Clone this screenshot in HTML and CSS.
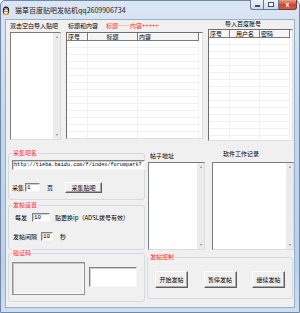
FILE: index.html
```html
<!DOCTYPE html>
<html lang="zh-CN">
<head>
  <meta charset="UTF-8">
  <title>猫草百度贴吧发帖机</title>
  <link rel="stylesheet" href="styles.css">
</head>
<body>
  <div class="window">
    <div class="titlebar">
      <svg class="app-icon" viewBox="0 0 8 9">
        <ellipse cx="4" cy="4.5" rx="3.2" ry="4" fill="#1a1a1a"/>
        <ellipse cx="4" cy="5.6" rx="2.2" ry="2.5" fill="#fff"/>
        <ellipse cx="3" cy="2.5" rx=".6" ry=".8" fill="#fff"/>
        <ellipse cx="5" cy="2.5" rx=".6" ry=".8" fill="#fff"/>
        <path d="M3.1 3.4h1.8l-.9.8z" fill="#f5b400"/>
        <path d="M1.4 4.4q2.6 1 5.2 0v.9q-2.6 1-5.2 0z" fill="#e02020"/>
        <ellipse cx="2.5" cy="8.4" rx="1.3" ry=".55" fill="#f5b400"/>
        <ellipse cx="5.5" cy="8.4" rx="1.3" ry=".55" fill="#f5b400"/>
      </svg>
      <span class="title">猫草百度贴吧发帖机qq2609906734</span>
      <div class="caption">
        <span class="cbtn min"><i></i></span>
        <span class="cbtn max"><i></i></span>
        <span class="cbtn close">x</span>
      </div>
    </div>

    <div class="client">
      <div class="top-row">
        <div class="col-bars">
          <div class="lbl">双击空白导入贴吧</div>
          <div class="listbox lb-bars">
            <div class="sb"><span class="up"></span><span class="down"></span></div>
          </div>
        </div>

        <div class="col-posts">
          <div class="lbl">标题和内容<span class="red hint">标题——内容+++++</span></div>
          <div class="grid posts-grid">
            <div class="gcol w-no"><div class="th">序号</div><div class="td"></div></div>
            <div class="gcol w-title"><div class="th center">标题</div><div class="td"></div></div>
            <div class="gcol w-body"><div class="th">内容</div><div class="td"></div></div>
            <div class="gfill"></div>
          </div>
        </div>

        <div class="col-accounts">
          <div class="lbl">导入百度账号</div>
          <div class="grid acc-grid">
            <div class="gcol w-no"><div class="th">序号</div><div class="td"></div></div>
            <div class="gcol w-user"><div class="th user">用户名</div><div class="td"></div></div>
            <div class="gcol w-pass"><div class="th">密码</div><div class="td"></div></div>
            <div class="gfill"></div>
          </div>
        </div>
      </div>

      <div class="bottom-row">
        <div class="left-stack">
          <div class="group g-collect">
            <div class="legend">采集吧名</div>
            <div class="edit url">http://tieba.baidu.com/f/index/forumpark?</div>
            <div class="frow r-pages">
              <span>采集</span>
              <div class="edit e-page">1</div>
              <span class="page-unit">页</span>
              <div class="btn b-collect">采集贴吧</div>
            </div>
          </div>

          <div class="group g-post">
            <div class="legend">发帖设置</div>
            <div class="frow r-every">
              <span>每发</span>
              <div class="edit e-every">10</div>
              <span class="after-every">贴更换ip（ADSL拨号有效）</span>
            </div>
            <div class="frow r-gap">
              <span>发帖间隔</span>
              <div class="edit e-gap">10</div>
              <span class="sec">秒</span>
            </div>
          </div>

          <div class="group g-captcha">
            <div class="legend">验证码</div>
            <div class="captcha-row">
              <div class="pic"></div>
              <div class="edit e-code"></div>
            </div>
          </div>
        </div>

        <div class="right-part">
          <div class="lists">
            <div class="col-urls">
              <div class="lbl">帖子地址</div>
              <div class="listbox lb-urls">
                <div class="sb"><span class="up"></span><span class="down"></span></div>
              </div>
            </div>
            <div class="col-log">
              <div class="lbl">软件工作记录</div>
              <div class="listbox lb-log">
                <div class="sb"><span class="up"></span><span class="down"></span></div>
              </div>
            </div>
          </div>

          <div class="group g-control">
            <div class="legend">发帖控制</div>
            <div class="ctrl-btns">
              <div class="btn">开始发帖</div>
              <div class="btn">暂停发帖</div>
              <div class="btn">继续发帖</div>
            </div>
          </div>
        </div>
      </div>
    </div>
  </div>
</body>
</html>
```

FILE: styles.css
```css
* { box-sizing: border-box; }
body { margin: 0; width: 300px; height: 313px; overflow: hidden; background: #fff; font-family: "Noto Sans CJK SC", "Noto Sans", sans-serif; font-size: 6px; color: #000; }

/* window frame */
.window { width: 300px; height: 313px; border: 1px solid #7088a6; border-radius: 5px 5px 0 0; background: linear-gradient(to bottom, #dbe6f3, #c4d7ed 40%, #bcd1ea 85%, #cfdef0); }
.titlebar { height: 19px; display: flex; align-items: center; padding-left: 1px; }
.app-icon { width: 8px; height: 9px; flex: none; }
.title { margin-left: 5px; font-size: 7px; line-height: 9px; color: #1b1b1b; white-space: nowrap; }
.caption { margin-left: auto; margin-right: 2px; align-self: flex-start; margin-top: -1px; display: flex; }
.cbtn { height: 10px; border: 1px solid #66799a; border-top: 0; display: flex; align-items: center; justify-content: center; background: linear-gradient(to bottom, #eef3f9, #cfdbea); }
.cbtn.min { width: 13px; border-right: 0; border-radius: 0 0 0 3px; }
.cbtn.min i { width: 5px; height: 2px; margin-top: 3px; background: #fff; border: 0.5px solid #3f4e63; }
.cbtn.max { width: 16px; }
.cbtn.max i { width: 6px; height: 5px; border: 1px solid #3f4e63; background: #fff; }
.cbtn.close { width: 18px; border-left: 0; border-color: #7a3328; border-radius: 0 0 3px 0; background: linear-gradient(to bottom, #e7a08f, #c9452f 55%, #d4604a); color: #fff; font: bold 7px/8px "Liberation Sans", sans-serif; }

.client { height: 287px; margin: 0 5px; background: #f0f0f0; outline: 1px solid #9aaec7; }

/* common controls */
.lbl { height: 8px; line-height: 8px; white-space: nowrap; }
.red { color: #ff2a2a; }
.listbox { display: flex; justify-content: flex-end; background: #fff; border: 1px solid; border-color: #7b7b7b #dcdcdc #dcdcdc #7b7b7b; }
.sb { width: 7px; background: #ebebeb; display: flex; flex-direction: column; justify-content: space-between; align-items: center; padding: 3px 0; }
.up { width: 0; height: 0; border-left: 1.5px solid transparent; border-right: 1.5px solid transparent; border-bottom: 2px solid #8a8a8a; }
.down { width: 0; height: 0; border-left: 1.5px solid transparent; border-right: 1.5px solid transparent; border-top: 2px solid #8a8a8a; }

.grid { display: flex; background: #fff; border: 1px solid; border-color: #6d6d6d #dedede #dedede #6d6d6d; }
.gcol { display: flex; flex-direction: column; flex: none; }
.gfill { flex: 1; }
.th { height: 8px; line-height: 7px; padding-left: 1px; background: #f4f4f4; border-right: 1px solid #7a7a7a; border-bottom: 1px solid #7a7a7a; box-shadow: inset 1px 1px #fff; white-space: nowrap; }
.th.center { text-align: center; padding-left: 0; }
.th.user { padding-left: 6px; }
.td { flex: 1; border-right: 1px solid #f0f0f0; background: repeating-linear-gradient(to bottom, transparent 0 6px, #f0f0f0 6px 7px); }

.edit { background: #fff; border: 1px solid; border-color: #828282 #f6f6f6 #f6f6f6 #828282; box-shadow: inset 1px 1px #cdcdcd; font-family: "Liberation Mono", monospace; font-size: 6px; line-height: 7px; padding-left: 1px; overflow: hidden; white-space: nowrap; }
.btn { background: #f0f0f0; border: 1px solid; border-color: #fdfdfd #5e5e5e #5e5e5e #fdfdfd; box-shadow: inset -1px -1px #a9a9a9; display: flex; align-items: center; justify-content: center; white-space: nowrap; }
.group { border: 1px solid #d2dae2; border-radius: 3px; }
.legend { width: fit-content; height: 8px; line-height: 8px; margin: -5px 0 0 3px; padding: 0 1px; background: #f0f0f0; color: #ff2a2a; }
.frow { display: flex; align-items: center; white-space: nowrap; }

/* top row */
.top-row { display: flex; height: 121px; padding-left: 4px; }
.col-bars { width: 51px; }
.col-bars .lbl { margin-top: 2px; }
.lb-bars { margin-top: 2px; height: 108px; }
.col-posts { width: 137px; margin-left: 5px; }
.col-posts .lbl { margin-top: 2px; padding-left: 2px; }
.hint { margin-left: 8px; }
.posts-grid { margin-top: 2px; height: 107px; }
.col-accounts { width: 85px; margin-left: 5px; }
.col-accounts .lbl { padding-left: 17px; }
.acc-grid { margin-top: 1px; height: 112px; }
.w-no { width: 21px; }
.w-title { width: 50px; }
.w-body { width: 61px; }
.w-user { width: 30px; }
.w-pass { width: 30px; }

/* bottom row */
.bottom-row { display: flex; height: 166px; }
.left-stack { width: 137px; margin-left: 2px; }
.g-collect { margin-top: 12px; height: 47px; }
.url { margin: 3px 0 0 3px; width: 133px; height: 10px; line-height: 8px; font-size: 5.2px; }
.r-pages { margin-top: 12px; height: 11px; padding-left: 3px; }
.e-page { width: 15px; height: 9px; margin-left: 1px; }
.page-unit { margin-left: 7px; }
.b-collect { width: 37px; height: 11px; margin-left: 12px; }
.g-post { margin-top: 5px; height: 45px; }
.r-every { margin-top: 4px; height: 9px; padding-left: 6px; }
.e-every { width: 18px; height: 9px; margin-left: 5px; }
.after-every { margin-left: 5px; }
.r-gap { margin-top: 10px; height: 9px; padding-left: 4px; }
.e-gap { width: 12px; height: 9px; margin-left: 4px; }
.sec { margin-left: 7px; }
.g-captcha { margin-top: 3px; height: 49px; }
.captcha-row { display: flex; align-items: flex-start; margin-top: 5px; padding-left: 3px; }
.pic { width: 73px; height: 33px; border: 1px solid #8f8f8f; box-shadow: inset 1px 1px #c4c4c4, inset -1px -1px #fbfbfb; background: #f0f0f0; }
.e-code { width: 48px; height: 20px; margin: 5px 0 0 4px; }

.right-part { width: 147px; margin-left: 2px; }
.lists { display: flex; }
.col-urls { width: 57px; margin-left: 1px; }
.col-urls .lbl { margin-top: 11px; padding-left: 2px; }
.lb-urls { margin-top: 2px; height: 88px; }
.col-log { width: 82px; margin-left: 7px; }
.col-log .lbl { margin-top: 9px; padding-left: 11px; }
.lb-log { margin-top: 4px; height: 88px; }
.g-control { margin-top: 7px; height: 42px; width: 146px; }
.g-control .legend { margin-left: 1px; }
.ctrl-btns { display: flex; justify-content: space-between; padding: 0 7px; margin-top: 10px; }
.ctrl-btns .btn { width: 33px; height: 17px; }
```
